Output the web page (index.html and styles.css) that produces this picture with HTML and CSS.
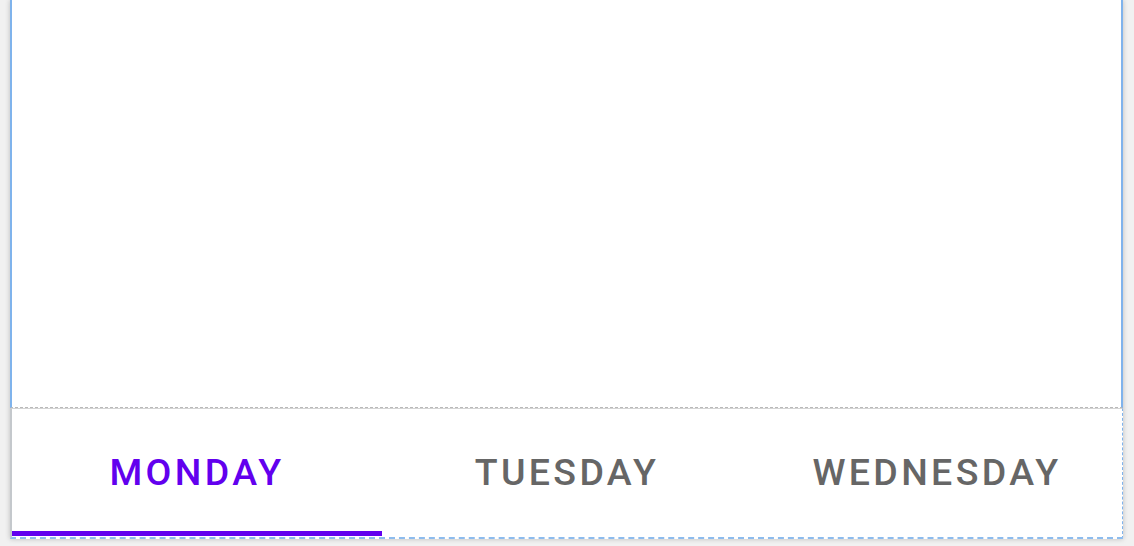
FILE: index.html
```html
<!DOCTYPE html>
<html>
<head>
<meta charset="utf-8">
<link rel="stylesheet" href="styles.css">
</head>
<body>
<div class="frame">
  <div class="content"></div>
  <div class="tabbar">
    <div class="tab active"><span class="label">MONDAY</span></div>
    <div class="tab"><span class="label">TUESDAY</span></div>
    <div class="tab"><span class="label">WEDNESDAY</span></div>
  </div>
</div>
</body>
</html>
```
FILE: styles.css
```css
html, body {
  margin: 0;
  padding: 0;
}
body {
  width: 1134px;
  height: 546px;
  overflow: hidden;
  background: #f1f1f1;
  font-family: Roboto, "Liberation Sans", sans-serif;
}
.frame {
  margin-left: 10px;
  width: 1113px;
  height: 539px;
  display: flex;
  flex-direction: column;
  background: #fff;
  box-shadow: 0 0 5px rgba(0, 0, 0, 0.22);
}
.content {
  height: 408px;
  border-left: 2px solid #7fb3ec;
  border-right: 2px solid #7fb3ec;
  box-sizing: border-box;
  border-bottom: 1px dashed #b9b9b9;
}
.tabbar {
  flex: 1;
  display: flex;
  box-sizing: border-box;
  border-left: 2px solid #c4c8cc;
  border-right: 1px dashed #7fb3ec;
  border-bottom: 2px dashed #8dbcee;
  border-top: 1px solid #d4d4d4;
}
.tab {
  flex: 1;
  display: flex;
  align-items: center;
  justify-content: center;
  box-sizing: border-box;
  border-bottom: 5px solid transparent;
  padding-top: 4px;
  margin-bottom: 1px;
}
.tab.active {
  border-bottom-color: #6200ee;
}
.label {
  font-size: 37.5px;
  font-weight: 500;
  letter-spacing: 3.35px;
  color: #666666;
}
.tab.active .label {
  color: #6200ee;
}
```
